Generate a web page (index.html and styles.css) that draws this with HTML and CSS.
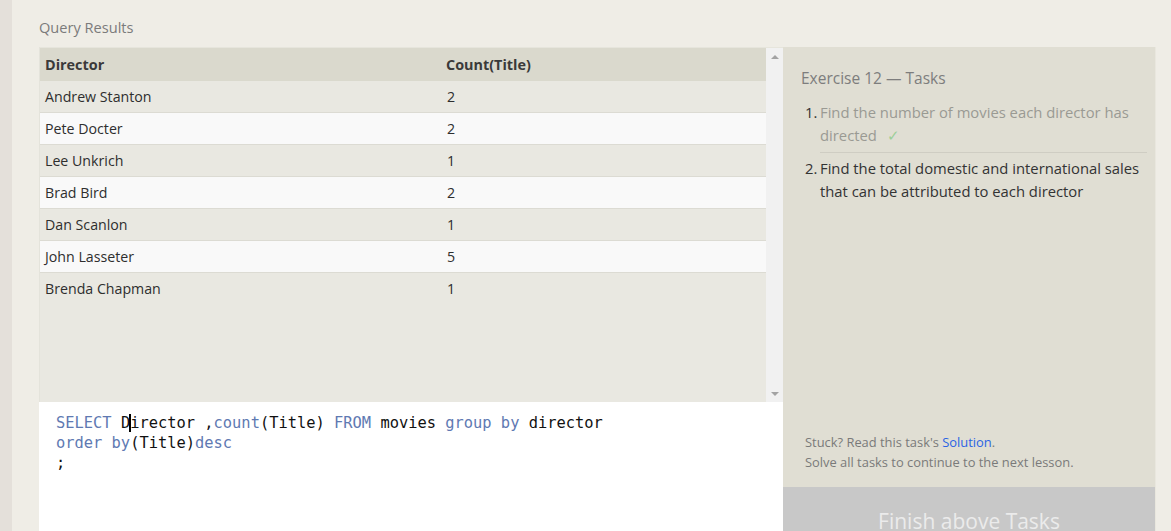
FILE: index.html
```html
<!DOCTYPE html>
<html>
<head>
<meta charset="utf-8">
<link rel="stylesheet" href="styles.css">
</head>
<body>
<div class="strip"></div>
<main class="main">
  <div class="label">Query Results</div>
  <div class="workspace">
    <section class="results">
      <div class="table-area">
        <div class="table-wrap">
          <table class="grid">
            <thead>
              <tr><th class="c1">Director</th><th>Count(Title)</th></tr>
            </thead>
            <tbody>
              <tr><td>Andrew Stanton</td><td>2</td></tr>
              <tr><td>Pete Docter</td><td>2</td></tr>
              <tr><td>Lee Unkrich</td><td>1</td></tr>
              <tr><td>Brad Bird</td><td>2</td></tr>
              <tr><td>Dan Scanlon</td><td>1</td></tr>
              <tr><td>John Lasseter</td><td>5</td></tr>
              <tr><td>Brenda Chapman</td><td>1</td></tr>
            </tbody>
          </table>
        </div>
        <div class="scrollbar">
          <span class="arrow up"></span>
          <span class="arrow down"></span>
        </div>
      </div>
      <div class="editor">
        <div class="line"><span class="kw">SELECT</span> D<span class="caret"></span>irector ,<span class="kw">count</span>(Title) <span class="kw">FROM</span> movies <span class="kw">group by</span> director</div>
        <div class="line"><span class="kw">order by</span>(Title)<span class="kw">desc</span></div>
        <div class="line">;</div>
      </div>
    </section>
    <aside class="panel">
      <div class="tasks">
        <h2 class="title">Exercise 12 — Tasks</h2>
        <ol class="task-list">
          <li class="done"><span class="num">1.</span><span class="txt">Find the number of movies each director has directed<span class="check">✓</span></span></li>
          <li><span class="num">2.</span><span class="txt">Find the total domestic and international sales that can be attributed to each director</span></li>
        </ol>
      </div>
      <div class="stuck">
        <div>Stuck? Read this task's <a class="link">Solution</a>.</div>
        <div>Solve all tasks to continue to the next lesson.</div>
      </div>
      <div class="finish">Finish above Tasks</div>
    </aside>
  </div>
</main>
</body>
</html>
```

FILE: styles.css
```css
html, body {
  margin: 0;
  padding: 0;
  height: 531px;
  overflow: hidden;
}
body {
  display: flex;
  background: #efede6;
  font-family: "Open Sans", "Noto Sans", sans-serif;
  color: #333;
}
.strip {
  width: 12px;
  flex: none;
  background: #e4e0da;
}
.main {
  flex: 1;
  padding: 17px 0 0 27px;
}
.label {
  font-size: 14.6px;
  line-height: 20px;
  color: #7b7b7b;
  margin-bottom: 10px;
}
.workspace {
  display: flex;
  width: 1117px;
}
.results {
  width: 744px;
  flex: none;
  display: flex;
  flex-direction: column;
}
.table-area {
  height: 355px;
  display: flex;
  background: #e9e8e1;
}
.table-wrap {
  flex: 1;
  border-left: 1px solid #e4e3db;
}
.grid {
  width: 100%;
  border-collapse: collapse;
  font-size: 14.2px;
}
.grid th {
  background: #dad9cd;
  text-align: left;
  font-weight: 700;
  font-size: 14.4px;
  color: #3a3a3a;
  height: 33px;
  padding: 0 5px;
  border-top: 1px solid #e6e5dc;
}
.grid th.c1 {
  width: 391px;
}
.grid td {
  height: 31px;
  padding: 0 5px;
  border-bottom: 1px solid #dcdbd3;
  color: #2e2e2e;
}
.grid td + td {
  padding-left: 6px;
}
.grid tbody tr:nth-child(odd) td {
  background: #e9e8e1;
}
.grid tbody tr:nth-child(even) td {
  background: #f9f9f9;
}
.grid tbody tr:last-child td {
  border-bottom: none;
}
.scrollbar {
  width: 17px;
  flex: none;
  background: #f1f1f1;
  border-top: 1px solid #e6e5dc;
  display: flex;
  flex-direction: column;
  justify-content: space-between;
  align-items: center;
  padding: 7px 0 6px;
  box-sizing: border-box;
}
.arrow {
  width: 0;
  height: 0;
  border-left: 4px solid transparent;
  border-right: 4px solid transparent;
}
.arrow.up {
  border-bottom: 4px solid #a3a3a3;
}
.arrow.down {
  border-top: 4px solid #a3a3a3;
}
.editor {
  background: #ffffff;
  height: 140px;
  padding: 11px 0 0 17px;
  font-family: "DejaVu Sans Mono", "Liberation Mono", monospace;
  font-size: 15.4px;
  line-height: 20px;
  color: #111;
}
.line {
  white-space: pre;
}
.kw {
  color: #6079b2;
}
.caret {
  display: inline-block;
  width: 2px;
  height: 18px;
  margin: 0 -1px;
  background: #000;
  vertical-align: -4px;
}
.panel {
  width: 373px;
  flex: none;
  height: 500px;
  background: #e0ded3;
  border-right: 1px solid #e9e7de;
  box-sizing: border-box;
  display: flex;
  flex-direction: column;
}
.tasks {
  padding: 19px 8px 0 18px;
}
.title {
  margin: 0 0 11px;
  font-size: 15.5px;
  font-weight: 400;
  line-height: 24px;
  color: #7d7d7d;
}
.task-list {
  list-style: none;
  margin: 0;
  padding: 0;
  font-size: 14.8px;
  line-height: 23px;
}
.task-list li {
  display: flex;
  padding: 0 0 5px 4px;
  color: #333;
}
.task-list li + li {
  border-top: 1px solid #cfcdc3;
  padding-top: 4px;
  margin-left: 19px;
  padding-left: 0;
}
.task-list li + li .num {
  margin-left: -15px;
}
.num {
  width: 15px;
  flex: none;
  color: #333;
}
.done .txt {
  color: #9a9a93;
}
.check {
  color: #9ccf99;
  margin-left: 10px;
}
.stuck {
  margin-top: auto;
  padding: 0 0 15px 22px;
  font-size: 12.9px;
  line-height: 20px;
  color: #7a7a7a;
}
.link {
  color: #2a63e4;
}
.finish {
  height: 60px;
  flex: none;
  background: #c8c8c8;
  color: #ebebeb;
  font-size: 21px;
  text-align: center;
  padding-top: 20px;
  box-sizing: border-box;
}
```
